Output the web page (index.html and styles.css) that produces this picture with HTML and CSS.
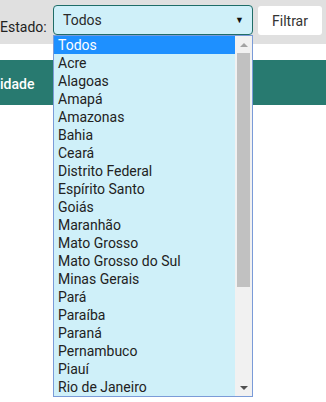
FILE: index.html
```html
<!DOCTYPE html>
<html>
<head>
  <title>Filtro por estado</title>
  <meta charset="UTF-8">
  <link rel="stylesheet" href="styles.css">
</head>
<body>
  <div class="filter-bar">
    <label class="filter-label">Estado:</label>
    <div class="select-wrap">
      <div class="select-box">
        <span>Todos</span>
        <span class="select-arrow">&#9660;</span>
      </div>
      <div class="dropdown">
        <ul class="options">
          <li class="selected">Todos</li>
          <li>Acre</li>
          <li>Alagoas</li>
          <li>Amapá</li>
          <li>Amazonas</li>
          <li>Bahia</li>
          <li>Ceará</li>
          <li>Distrito Federal</li>
          <li>Espírito Santo</li>
          <li>Goiás</li>
          <li>Maranhão</li>
          <li>Mato Grosso</li>
          <li>Mato Grosso do Sul</li>
          <li>Minas Gerais</li>
          <li>Pará</li>
          <li>Paraíba</li>
          <li>Paraná</li>
          <li>Pernambuco</li>
          <li>Piauí</li>
          <li>Rio de Janeiro</li>
        </ul>
        <div class="scrollbar">
          <div class="scroll-btn up"></div>
          <div class="scroll-track">
            <div class="scroll-thumb"></div>
          </div>
          <div class="scroll-btn down"></div>
        </div>
      </div>
    </div>
    <button class="filter-btn">Filtrar</button>
  </div>

  <div class="table-head">
    <div class="head-cell">idade</div>
  </div>
</body>
</html>
```

FILE: styles.css
```css
html, body {
  height: 100%;
}
body {
  margin: 0;
  min-height: 402px;
  font-family: Roboto, "Liberation Sans", sans-serif;
  font-size: 14px;
  color: #222;
  background-color: #fff;
}
.filter-bar {
  display: flex;
  align-items: flex-start;
  height: 44px;
  padding-top: 5px;
  box-sizing: border-box;
  background-color: #e0e0e0;
}
.filter-label {
  width: 53px;
  padding-top: 14px;
  color: #222;
}
.select-wrap {
  position: relative;
  width: 200px;
}
.select-box {
  display: flex;
  justify-content: space-between;
  align-items: center;
  height: 30px;
  box-sizing: border-box;
  padding: 0 8px 0 9px;
  border: 1px solid #1f6d68;
  border-radius: 4px;
  background-color: #cff0f9;
  color: #2a2a2a;
}
.select-arrow {
  font-size: 9px;
  color: #111;
}
.dropdown {
  position: absolute;
  top: 30px;
  left: 0;
  width: 200px;
  display: flex;
  border: 1px solid #7a9bd8;
  box-sizing: border-box;
  background-color: #cff0f9;
  z-index: 2;
}
.options {
  flex: 1;
  list-style: none;
  margin: 0;
  padding: 0;
}
.options li {
  height: 18px;
  line-height: 18px;
  padding-left: 4px;
  color: #222;
}
.options li.selected {
  background-color: #1e90ff;
  color: #fff;
}
.scrollbar {
  width: 17px;
  display: flex;
  flex-direction: column;
  background-color: #f1f1f1;
}
.scroll-btn {
  height: 17px;
  display: flex;
  align-items: center;
  justify-content: center;
}
.scroll-btn::before {
  content: "";
  border-left: 4px solid transparent;
  border-right: 4px solid transparent;
}
.scroll-btn.up::before {
  border-bottom: 4px solid #a3a3a3;
}
.scroll-btn.down::before {
  border-top: 4px solid #505050;
}
.scroll-track {
  flex: 1;
  padding: 0 2px;
}
.scroll-thumb {
  height: 234px;
  background-color: #c1c1c1;
}
.filter-btn {
  margin: 1px 0 0 5px;
  width: 64px;
  height: 29px;
  border: none;
  border-radius: 3px;
  background-color: #fff;
  font-family: Roboto, "Liberation Sans", sans-serif;
  font-size: 14px;
  color: #333;
}
.table-head {
  margin-top: 16px;
  height: 45px;
  display: flex;
  align-items: center;
  background-color: #287a70;
}
.head-cell {
  padding-top: 3px;
  color: #fff;
  font-weight: 500;
}
```
